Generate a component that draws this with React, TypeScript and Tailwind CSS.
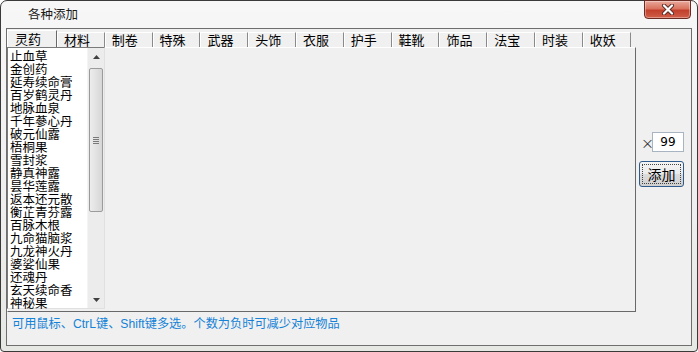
import React from "react";

const tabs = ["灵药", "材料", "制卷", "特殊", "武器", "头饰", "衣服", "护手", "鞋靴", "饰品", "法宝", "时装", "收妖"];
const items = [
  "止血草", "金创药", "延寿续命膏", "百岁鹤灵丹", "地脉血泉", "千年蔘心丹", "破元仙露", "梧桐果", "雪封浆", "静真神露",
  "昙华莲露", "返本还元散", "衡芷青芬露", "百脉木根", "九命猫脑浆", "九龙神火丹", "婆娑仙果", "还魂丹", "玄天续命香", "神秘果",
];

const font = { fontFamily: '"Noto Sans CJK SC", "Noto Sans", sans-serif' };
const tight = { fontFamily: '"Liberation Sans", "Noto Sans CJK SC", sans-serif' };

export default function App() {
  return (
    <div className="w-[698px] h-[352px] bg-white overflow-hidden" style={font}>
      <div className="w-[698px] h-[352px] flex flex-col rounded-t-[7px] rounded-b-[4px] border border-[#3a3a3a] bg-[linear-gradient(180deg,#f7f7f7_0%,#eeeeee_60%,#e6e8e4_100%)] relative">
        {/* title bar */}
        <div className="h-[27px] shrink-0 relative">
          <div className="absolute left-[27px] top-[5px] text-[12.5px] leading-[16px] text-[#1b1b1b]">各种添加</div>
          <div className="absolute right-[6px] top-[-1px] w-[47px] h-[19px] rounded-b-[4px] border border-[#6b2a22] bg-[linear-gradient(180deg,#e9a99b_0%,#d9735f_45%,#c2402c_55%,#d0604a_100%)] flex items-center justify-center shadow-[inset_0_0_0_1px_rgba(255,255,255,0.35)]">
            <svg width="14" height="11" viewBox="0 0 14 11">
              <path d="M3 1.5 L11 9.5 M11 1.5 L3 9.5" stroke="#5a2a22" strokeWidth="4" strokeLinecap="round" />
              <path d="M3 1.5 L11 9.5 M11 1.5 L3 9.5" stroke="#ffffff" strokeWidth="2.2" strokeLinecap="round" />
            </svg>
          </div>
        </div>
        {/* client area */}
        <div className="mx-[5px] mb-[5px] flex-1 border border-[#6e6e6e] bg-[#f0f0f0] flex flex-col">
          <div className="flex">
            {/* tab control */}
            <div className="w-[629px] flex flex-col">
              <div className="h-[18px] flex items-end">
                {tabs.map((t, i) =>
                  i === 0 ? (
                    <div
                      key={t}
                      className="w-[50px] h-[17px] border-t border-l border-white border-r border-r-[#696969] bg-[#f0f0f0] relative z-10 text-[13px] leading-[15px] pl-[7px] text-black"
                    >
                      {t}
                    </div>
                  ) : (
                    <div
                      key={t}
                      className="w-[47.8px] h-[15px] border-t border-l border-white border-r border-r-[#8a8a8a] bg-[#f0f0f0] text-[13px] leading-[14px] pl-[6px] text-black"
                    >
                      {t}
                    </div>
                  )
                )}
              </div>
              <div className="h-[265px] border-t border-l border-white border-r border-b border-r-[#696969] border-b-[#696969] relative flex">
                {/* listbox */}
                <div className="ml-[-1px] mt-[-1px] w-[98px] h-[262px] border border-[#7a7a7a] border-r-[#e0e0e0] border-b-[#e0e0e0] bg-white flex">
                  <div className="flex-1 flex flex-col pl-[2px] pt-[3px]" style={tight}>
                    {items.map((it) => (
                      <div key={it} className="h-[13px] shrink-0 text-[12.5px] leading-[13px] text-black whitespace-nowrap">
                        {it}
                      </div>
                    ))}
                  </div>
                  {/* scrollbar */}
                  <div className="w-[17px] bg-[#ececec] border-l border-[#f4f4f4] flex flex-col">
                    <div className="h-[17px] flex items-center justify-center">
                      <svg width="7" height="4" viewBox="0 0 7 4"><path d="M0 4 L3.5 0 L7 4 Z" fill="#404040" /></svg>
                    </div>
                    <div className="mt-[3px] mx-[1px] h-[144px] rounded-[2px] border border-[#9b9b9b] bg-[linear-gradient(90deg,#ededed_0%,#e2e2e2_50%,#d6d6d6_100%)] flex items-center justify-center">
                      <div className="flex flex-col gap-[1px]">
                        <div className="w-[6px] h-[1px] bg-[#7a7a7a]" />
                        <div className="w-[6px] h-[1px] bg-[#7a7a7a]" />
                        <div className="w-[6px] h-[1px] bg-[#7a7a7a]" />
                        <div className="w-[6px] h-[1px] bg-[#7a7a7a]" />
                      </div>
                    </div>
                    <div className="flex-1" />
                    <div className="h-[17px] flex items-center justify-center">
                      <svg width="7" height="4" viewBox="0 0 7 4"><path d="M0 0 L3.5 4 L7 0 Z" fill="#404040" /></svg>
                    </div>
                  </div>
                </div>
              </div>
            </div>
            {/* right controls */}
            <div className="flex flex-col pl-[3px] pt-[103px]">
              <div className="flex items-center h-[20px]">
                <span className="w-[13px] text-[13px] leading-[13px] text-[#333] pl-[2px]">×</span>
                <div className="w-[32px] h-[20px] border border-[#a9b4c2] bg-white text-[12px] leading-[18px] text-center text-black" style={{ fontFamily: '"DejaVu Sans", sans-serif' }}>
                  99
                </div>
              </div>
              <div className="mt-[9px] w-[45px] h-[26px] rounded-[3px] border border-[#2f5a8c] bg-[linear-gradient(180deg,#f4f4f4_0%,#ebebeb_50%,#dcdcdc_51%,#cfcfcf_100%)] p-[2px]">
                <div className="w-full h-full border border-dotted border-[#444] flex items-center justify-center text-[14px] leading-[14px] text-black">
                  添加
                </div>
              </div>
            </div>
          </div>
          <div className="pl-[5px] pt-[4px] text-[12.2px] leading-[16px] text-[#1482d6] whitespace-nowrap" style={tight}>
            可用鼠标、CtrL键、Shift键多选。个数为负时可减少对应物品
          </div>
        </div>
      </div>
    </div>
  );
}
